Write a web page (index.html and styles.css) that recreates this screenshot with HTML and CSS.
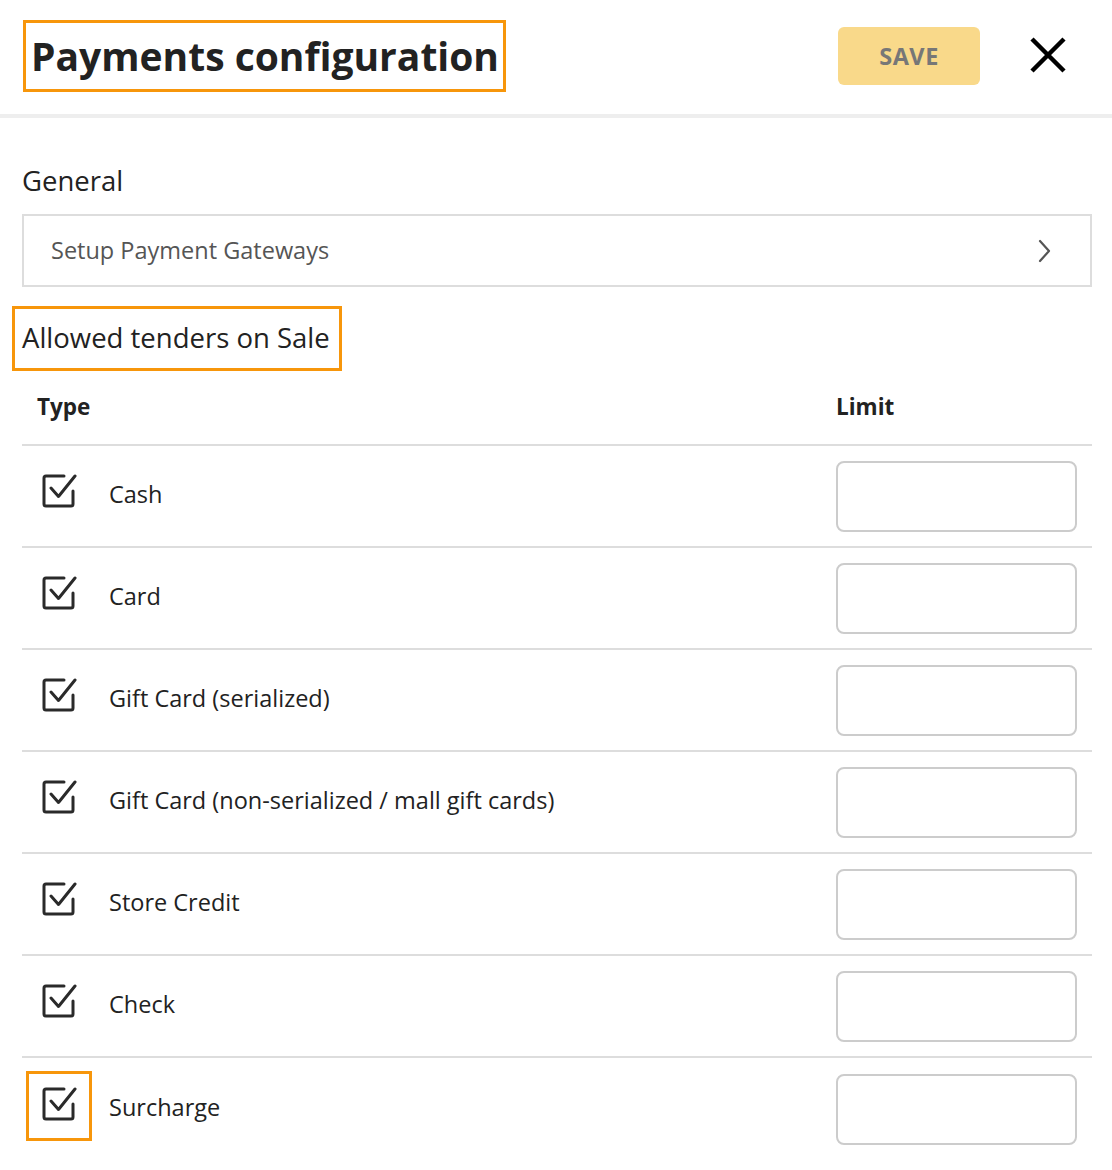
FILE: index.html
```html
<!DOCTYPE html>
<html lang="en">
<head>
    <meta charset="UTF-8">
    <title>Payments configuration</title>
    <link rel="stylesheet" href="styles.css">
</head>
<body>
    <header class="topbar">
        <h1 class="title mark">Payments configuration</h1>
        <button class="save">SAVE</button>
        <button class="close" aria-label="Close">
            <svg width="40" height="40" viewBox="0 0 40 40"><path d="M4 4L36 36M36 4L4 36" stroke="#000" stroke-width="4.5" fill="none"/></svg>
        </button>
    </header>
    <main class="content">
        <h2 class="section">General</h2>
        <a class="link-row" href="#">
            <span>Setup Payment Gateways</span>
            <svg width="14" height="24" viewBox="0 0 14 24"><path d="M2 2L11 12L2 22" stroke="#555" stroke-width="2.2" fill="none" stroke-linecap="round" stroke-linejoin="round"/></svg>
        </a>
        <h2 class="section tenders mark">Allowed tenders on Sale</h2>
        <div class="table">
            <div class="thead">
                <div class="th">Type</div>
                <div class="th">Limit</div>
            </div>
            <div class="row">
                <label class="type"><span class="check"><svg width="36" height="36" viewBox="0 0 36 36"><path d="M23 3H5a2 2 0 0 0-2 2v26a2 2 0 0 0 2 2h25a2 2 0 0 0 2-2V18M10 15l7.5 8.5L34 3"/></svg></span>Cash</label>
                <div class="limit"><input type="text"></div>
            </div>
            <div class="row">
                <label class="type"><span class="check"><svg width="36" height="36" viewBox="0 0 36 36"><path d="M23 3H5a2 2 0 0 0-2 2v26a2 2 0 0 0 2 2h25a2 2 0 0 0 2-2V18M10 15l7.5 8.5L34 3"/></svg></span>Card</label>
                <div class="limit"><input type="text"></div>
            </div>
            <div class="row">
                <label class="type"><span class="check"><svg width="36" height="36" viewBox="0 0 36 36"><path d="M23 3H5a2 2 0 0 0-2 2v26a2 2 0 0 0 2 2h25a2 2 0 0 0 2-2V18M10 15l7.5 8.5L34 3"/></svg></span>Gift Card (serialized)</label>
                <div class="limit"><input type="text"></div>
            </div>
            <div class="row">
                <label class="type"><span class="check"><svg width="36" height="36" viewBox="0 0 36 36"><path d="M23 3H5a2 2 0 0 0-2 2v26a2 2 0 0 0 2 2h25a2 2 0 0 0 2-2V18M10 15l7.5 8.5L34 3"/></svg></span>Gift Card (non-serialized / mall gift cards)</label>
                <div class="limit"><input type="text"></div>
            </div>
            <div class="row">
                <label class="type"><span class="check"><svg width="36" height="36" viewBox="0 0 36 36"><path d="M23 3H5a2 2 0 0 0-2 2v26a2 2 0 0 0 2 2h25a2 2 0 0 0 2-2V18M10 15l7.5 8.5L34 3"/></svg></span>Store Credit</label>
                <div class="limit"><input type="text"></div>
            </div>
            <div class="row">
                <label class="type"><span class="check"><svg width="36" height="36" viewBox="0 0 36 36"><path d="M23 3H5a2 2 0 0 0-2 2v26a2 2 0 0 0 2 2h25a2 2 0 0 0 2-2V18M10 15l7.5 8.5L34 3"/></svg></span>Check</label>
                <div class="limit"><input type="text"></div>
            </div>
            <div class="row last">
                <label class="type"><span class="check mark"><svg width="36" height="36" viewBox="0 0 36 36"><path d="M23 3H5a2 2 0 0 0-2 2v26a2 2 0 0 0 2 2h25a2 2 0 0 0 2-2V18M10 15l7.5 8.5L34 3"/></svg></span>Surcharge</label>
                <div class="limit"><input type="text"></div>
            </div>
        </div>
    </main>
</body>
</html>
```

FILE: styles.css
```css
/* reset */
body{
    margin: 0;
    font-family: "Open Sans", "Liberation Sans", sans-serif;
    color: #222;
    background: #fff;
}
h1,h2{
    margin: 0;
    font-weight: normal;
}
button{
    font-family: inherit;
    border: 0;
    background: none;
    padding: 0;
    cursor: pointer;
}
/* annotation boxes */
.mark{
    outline: 3px solid #f7960b;
    outline-offset: -3px;
}
/* header */
.topbar{
    height: 114px;
    border-bottom: 4px solid #eeeeee;
    display: flex;
    align-items: center;
    padding: 0 44px 0 23px;
}
.title{
    font-size: 39px;
    font-weight: 700;
    color: #222;
    height: 72px;
    line-height: 72px;
    padding: 0 7px 0 8px;
    box-sizing: border-box;
    margin-top: -2px;
}
.save{
    margin-left: auto;
    width: 142px;
    height: 58px;
    margin-top: -2px;
    border-radius: 6px;
    background: #f9d98a;
    color: #777;
    font-size: 23.5px;
    font-weight: 700;
    letter-spacing: 0.5px;
}
.close{
    margin-left: 48px;
    width: 40px;
    height: 40px;
    margin-top: -4px;
}
.close svg{
    display: block;
}
/* content */
.content{
    padding: 44px 20px 0 22px;
}
.section{
    font-size: 27.5px;
    line-height: 38px;
    color: #222;
}
.link-row{
    display: flex;
    align-items: center;
    justify-content: space-between;
    margin-top: 14px;
    height: 73px;
    box-sizing: border-box;
    border: 2px solid #dddddd;
    padding: 0 38px 2px 27px;
    text-decoration: none;
    color: #555;
    font-size: 23.5px;
}
.link-row svg{
    display: block;
    margin-top: 2px;
}
.tenders{
    display: inline-block;
    margin: 19px 0 0 -10px;
    padding: 13px 12px 14px 10px;
}
.thead{
    display: grid;
    grid-template-columns: 1fr 256px;
    height: 75px;
    align-items: center;
    border-bottom: 2px solid #dddddd;
    box-sizing: border-box;
    padding-bottom: 2px;
}
.th{
    font-size: 22.5px;
    font-weight: 700;
    color: #222;
}
.th:first-child{
    padding-left: 15px;
}
.row{
    display: grid;
    grid-template-columns: 1fr 256px;
    height: 102px;
    align-items: center;
    border-bottom: 2px solid #dddddd;
    box-sizing: border-box;
}
.row.last{
    border-bottom: 0;
}
.type{
    display: flex;
    align-items: center;
    font-size: 23.5px;
    color: #222;
    padding-bottom: 4px;
}
.check{
    display: flex;
    align-items: center;
    justify-content: center;
    width: 66px;
    height: 70px;
    margin: -2px 17px 0 4px;
    box-sizing: border-box;
}
.check svg{
    display: block;
    margin-top: -4px;
}
.check path{
    fill: none;
    stroke: #2a2a2a;
    stroke-width: 3;
    stroke-linecap: round;
    stroke-linejoin: round;
}
.limit input{
    display: block;
    width: 241px;
    height: 71px;
    box-sizing: border-box;
    border: 2px solid #cccccc;
    border-radius: 8px;
    font-size: 20px;
    padding: 0 12px;
}
```
